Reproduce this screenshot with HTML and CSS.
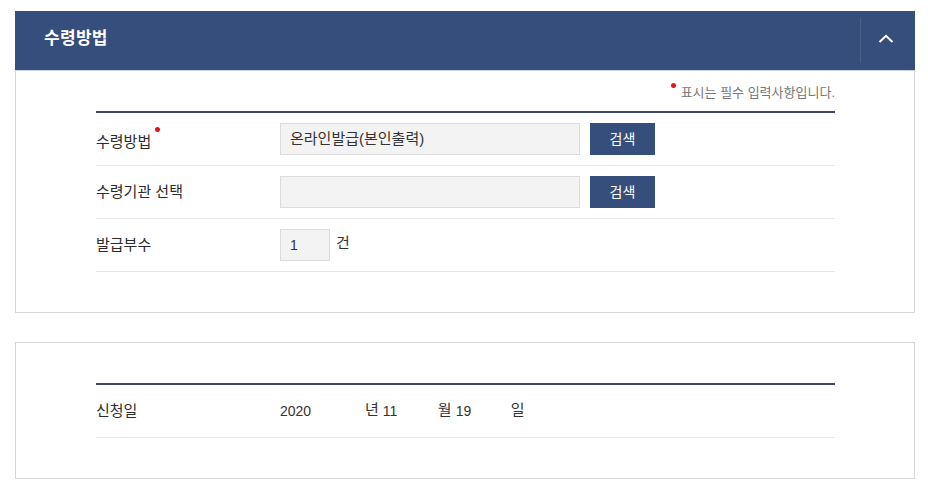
FILE: index.html
```html
<!DOCTYPE html>
<html lang="ko">
<head>
<meta charset="utf-8">
<title>수령방법</title>
<link rel="stylesheet" href="styles.css">
</head>
<body>
<div class="page">
  <section class="panel">
    <header class="panel-head">
      <h2 class="panel-title">수령방법</h2>
      <button class="toggle" type="button" aria-label="접기">
        <svg width="16" height="9" viewBox="0 0 16 9"><polyline points="1.5,8 8,1.8 14.5,8" fill="none" stroke="#fff" stroke-width="2"/></svg>
      </button>
    </header>
    <div class="panel-body">
      <p class="note"><span class="dot"></span>표시는 필수 입력사항입니다.</p>
      <div class="form">
        <div class="row">
          <div class="label">수령방법<span class="dot dot-label"></span></div>
          <div class="field">
            <div class="input">온라인발급(본인출력)</div>
            <button class="btn" type="button">검색</button>
          </div>
        </div>
        <div class="row">
          <div class="label">수령기관 선택</div>
          <div class="field">
            <div class="input"></div>
            <button class="btn" type="button">검색</button>
          </div>
        </div>
        <div class="row">
          <div class="label">발급부수</div>
          <div class="field">
            <div class="input input-qty">1</div>
            <span class="unit">건</span>
          </div>
        </div>
      </div>
    </div>
  </section>

  <section class="panel panel-plain">
    <div class="panel-body">
      <div class="form">
        <div class="row">
          <div class="label">신청일</div>
          <div class="field date">
            <span class="num num-year">2020</span><span class="unit-d">년</span><span class="num num-md">11</span><span class="unit-d">월</span><span class="num num-md">19</span><span class="unit-d">일</span>
          </div>
        </div>
      </div>
    </div>
  </section>
</div>
</body>
</html>
```

FILE: styles.css
```css
* { box-sizing: border-box; }

body {
  margin: 0;
  background: #fff;
  font-family: "Liberation Sans", "Noto Sans CJK KR", sans-serif;
  color: #333;
}

.page {
  padding: 11px 13px 0 15px;
  width: 928px;
}

.panel { width: 900px; }

.panel-head {
  height: 59px;
  background: #354e7b;
  display: flex;
  align-items: center;
  padding-left: 29px;
}

.panel-title {
  margin: 0;
  color: #fff;
  font-size: 17px;
  font-weight: bold;
  line-height: 20px;
  letter-spacing: 0.3px;
  padding-bottom: 3px;
}

.toggle {
  margin-left: auto;
  width: 55px;
  height: 45px;
  border: 0;
  border-left: 1px solid #4a6189;
  background: transparent;
  padding: 0 5px 5px 0;
  display: flex;
  align-items: center;
  justify-content: center;
}

.toggle svg { display: block; }

.panel-body {
  border: 1px solid #d6d6d6;
  border-top-color: #c8d2e2;
  padding: 0 79px 40px 80px;
}

.panel-plain { margin-top: 29px; }
.panel-plain .panel-body {
  border-top-color: #d6d6d6;
  padding-top: 40px;
}

.note {
  margin: 0;
  height: 40px;
  display: flex;
  justify-content: flex-end;
  align-items: center;
  font-size: 13px;
  letter-spacing: 0;
  color: #777;
  padding-top: 1px;
}

.dot {
  display: inline-block;
  width: 5px;
  height: 5px;
  border-radius: 50%;
  background: #e3141e;
  margin-right: 5px;
  align-self: flex-start;
  margin-top: 11px;
}

.form { border-top: 2px solid #3e4a63; }

.row {
  height: 53px;
  border-bottom: 1px solid #e6e6e6;
  display: flex;
  align-items: center;
}

.label {
  width: 184px;
  flex: none;
  font-size: 15px;
  line-height: 20px;
  color: #2b2b2b;
  letter-spacing: 0;
}

.dot-label {
  margin: 0 0 0 4px;
  vertical-align: 15px;
  width: 5px;
  height: 5px;
}

.field {
  display: flex;
  align-items: center;
}

.input {
  width: 300px;
  height: 32px;
  background: #f3f3f3;
  border: 1px solid #dcdcdc;
  padding: 0 9px;
  font-size: 15px;
  line-height: 30px;
  color: #333;
}

.input-qty { width: 50px; font-size: 14px; }

.btn {
  margin-left: 10px;
  width: 65px;
  height: 32px;
  border: 0;
  background: #354e7b;
  color: #fff;
  font-family: inherit;
  font-size: 14px;
  padding: 0 0 2px;
}

.unit {
  margin-left: 6px;
  font-size: 15px;
  line-height: 20px;
  margin-bottom: 4px;
}

.date { font-size: 14px; }

.num { color: #333; line-height: 20px; }
.num-year { width: 85px; display: inline-block; }
.num-md { width: 55px; display: inline-block; }
.unit-d {
  font-size: 15px;
  line-height: 20px;
  margin-right: 4px;
  margin-bottom: 2px;
}
.unit-d:last-child { margin-right: 0; }
```
